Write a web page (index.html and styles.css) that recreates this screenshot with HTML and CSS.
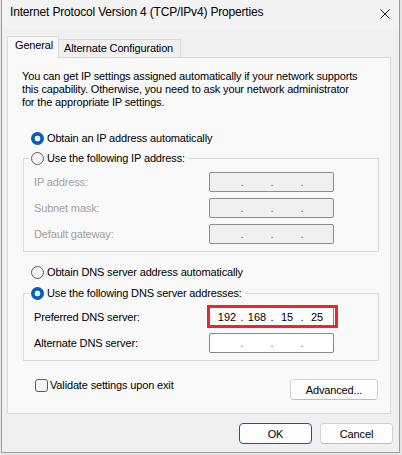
FILE: index.html
```html
<!DOCTYPE html>
<html lang="en">
<head>
<meta charset="utf-8">
<title>Internet Protocol Version 4 (TCP/IPv4) Properties</title>
<link rel="stylesheet" href="styles.css">
</head>
<body>
<div class="window">
  <div class="titlebar">
    <span class="title">Internet Protocol Version 4 (TCP/IPv4) Properties</span>
    <svg class="close" width="10" height="10" viewBox="0 0 10 10"><path d="M0.5 0.5 L9.5 9.5 M9.5 0.5 L0.5 9.5" stroke="#1b1b1b" stroke-width="1" fill="none"/></svg>
  </div>
  <div class="content">
    <div class="tabs">
      <div class="tab active">General</div>
      <div class="tab">Alternate Configuration</div>
    </div>
    <div class="panel">
      <p class="desc">You can get IP settings assigned automatically if your network supports<br>this capability. Otherwise, you need to ask your network administrator<br>for the appropriate IP settings.</p>

      <label class="opt opt-first"><span class="radio on"></span>Obtain an IP address automatically</label>
      <fieldset class="group group-first">
        <legend><span class="radio"></span>Use the following IP address:</legend>
        <div class="grid">
          <span class="lbl dis">IP address:</span>
          <div class="ip dis"><span class="seg"></span><span class="dot">.</span><span class="seg"></span><span class="dot">.</span><span class="seg"></span><span class="dot">.</span><span class="seg"></span></div>
          <span class="lbl dis">Subnet mask:</span>
          <div class="ip dis"><span class="seg"></span><span class="dot">.</span><span class="seg"></span><span class="dot">.</span><span class="seg"></span><span class="dot">.</span><span class="seg"></span></div>
          <span class="lbl dis">Default gateway:</span>
          <div class="ip dis"><span class="seg"></span><span class="dot">.</span><span class="seg"></span><span class="dot">.</span><span class="seg"></span><span class="dot">.</span><span class="seg"></span></div>
        </div>
      </fieldset>

      <label class="opt opt-second"><span class="radio"></span>Obtain DNS server address automatically</label>
      <fieldset class="group group-second">
        <legend><span class="radio on"></span>Use the following DNS server addresses:</legend>
        <div class="grid">
          <span class="lbl">Preferred DNS server:</span>
          <div class="ip marked"><span class="seg">192</span><span class="dot dark">.</span><span class="seg">168</span><span class="dot dark">.</span><span class="seg">15</span><span class="dot dark">.</span><span class="seg">25</span><span class="highlight"></span></div>
          <span class="lbl">Alternate DNS server:</span>
          <div class="ip"><span class="seg"></span><span class="dot">.</span><span class="seg"></span><span class="dot">.</span><span class="seg"></span><span class="dot">.</span><span class="seg"></span></div>
        </div>
      </fieldset>

      <div class="bottomrow">
        <label class="check"><span class="box"></span>Validate settings upon exit</label>
        <button class="btn adv">Advanced...</button>
      </div>
    </div>
    <div class="actions">
      <button class="btn ok">OK</button>
      <button class="btn">Cancel</button>
    </div>
  </div>
</div>
</body>
</html>
```
FILE: styles.css
```css
* { box-sizing: border-box; }
html, body { margin: 0; padding: 0; }
body {
  width: 402px;
  height: 455px;
  overflow: hidden;
  background: #e6e6e6;
  font-family: "Liberation Sans", Arial, sans-serif;
  font-size: 11px;
  letter-spacing: -0.15px;
  color: #000;
}
.window {
  margin-left: 1px;
  width: 399px;
  height: 453px;
  border: 1px solid #9c9c9c;
  border-top: none;
  background: #f0f0f0;
  display: flex;
  flex-direction: column;
}
.titlebar {
  height: 29px;
  flex: none;
  background: #f3f3f3;
  display: flex;
  align-items: flex-start;
}
.title {
  padding: 5px 0 0 8px;
  font-size: 12px;
  line-height: 15px;
  letter-spacing: -0.18px;
  white-space: nowrap;
}
.close {
  flex: none;
  margin: 9px 9px 0 auto;
}
.content {
  flex: 1;
  padding: 7px 0 0 5px;
}
.tabs {
  display: flex;
  align-items: flex-end;
  height: 21px;
}
.tab {
  width: 122px;
  height: 18px;
  padding: 2px 0 0 5px;
  border: 1px solid #d9d9d9;
  border-left: none;
  border-bottom: none;
  background: #f0f0f0;
  line-height: 13px;
  white-space: nowrap;
}
.tab.active {
  width: 52px;
  height: 22px;
  margin-bottom: -1px;
  padding-left: 7px;
  border-left: 1px solid #d9d9d9;
  background: #f9f9f9;
  position: relative;
  z-index: 1;
}
.panel {
  width: 384px;
  height: 357px;
  border: 1px solid #d9d9d9;
  background: #f9f9f9;
  padding: 0 11px 0 15px;
}
.desc {
  margin: 12px 0 0 -1px;
  line-height: 13px;
  white-space: nowrap;
}
.opt {
  display: flex;
  align-items: center;
  gap: 3px;
  height: 14px;
  line-height: 14px;
  margin-left: 8px;
  white-space: nowrap;
}
.opt-first { margin-top: 22px; }
.opt-second { margin-top: 13px; }
.radio {
  flex: none;
  width: 13px;
  height: 13px;
  border-radius: 50%;
  border: 1px solid #5c5c5c;
  background: #f6f6f6;
}
.radio.on {
  border: none;
  background: radial-gradient(circle at center, #ffffff 0 2.6px, #005fb8 3.2px);
}
.group {
  margin: 0;
  padding: 7px 0;
  border: 1px solid #dcdcdc;
  min-width: 0;
}
.group-first { margin-top: 6px; }
.group-second { margin-top: 7px; }
.group legend {
  display: flex;
  align-items: center;
  gap: 3px;
  height: 14px;
  line-height: 14px;
  margin-left: 5px;
  padding: 0 3px 0 2px;
  white-space: nowrap;
}
.grid {
  display: grid;
  grid-template-columns: 175px 125px;
  grid-auto-rows: 20px;
  row-gap: 6px;
  padding-left: 10px;
  align-items: center;
}
.lbl { white-space: nowrap; }
.lbl.dis { color: #a0a0a0; }
.ip {
  position: relative;
  display: flex;
  align-items: center;
  height: 20px;
  padding-left: 4px;
  border: 1px solid #878787;
  border-radius: 2px;
  background: #ffffff;
  line-height: 14px;
  letter-spacing: 0;
}
.ip.dis {
  background: #f0f0f0;
  border-color: #8e8e8e;
}
.seg {
  width: 26px;
  text-align: center;
}
.dot {
  width: 4px;
  text-align: center;
  color: #5e5e7a;
}
.dot.dark { color: #000; }
.highlight {
  position: absolute;
  left: -3px;
  top: -3px;
  width: 131px;
  height: 23px;
  border: 3px solid #e8282c;
}
.bottomrow {
  display: flex;
  justify-content: space-between;
  align-items: flex-start;
  margin-top: 17px;
}
.check {
  display: flex;
  align-items: center;
  gap: 2px;
  height: 14px;
  line-height: 14px;
  margin-left: 12px;
  white-space: nowrap;
}
.box {
  flex: none;
  width: 13px;
  height: 13px;
  border: 1px solid #5c5c5c;
  border-radius: 3px;
  background: #f6f6f6;
}
.btn {
  font: inherit;
  letter-spacing: inherit;
  color: #000;
  height: 21px;
  width: 73px;
  padding: 0;
  background: #fdfdfd;
  border: 1px solid #d3d3d3;
  border-bottom-color: #bcbcbc;
  border-radius: 4px;
}
.btn.adv {
  width: 88px;
  margin: 1px 1px 0 0;
}
.btn.ok {
  border-color: #005fb8;
}
.actions {
  display: flex;
  justify-content: flex-end;
  gap: 8px;
  margin-top: 9px;
  padding-right: 6px;
}
```
